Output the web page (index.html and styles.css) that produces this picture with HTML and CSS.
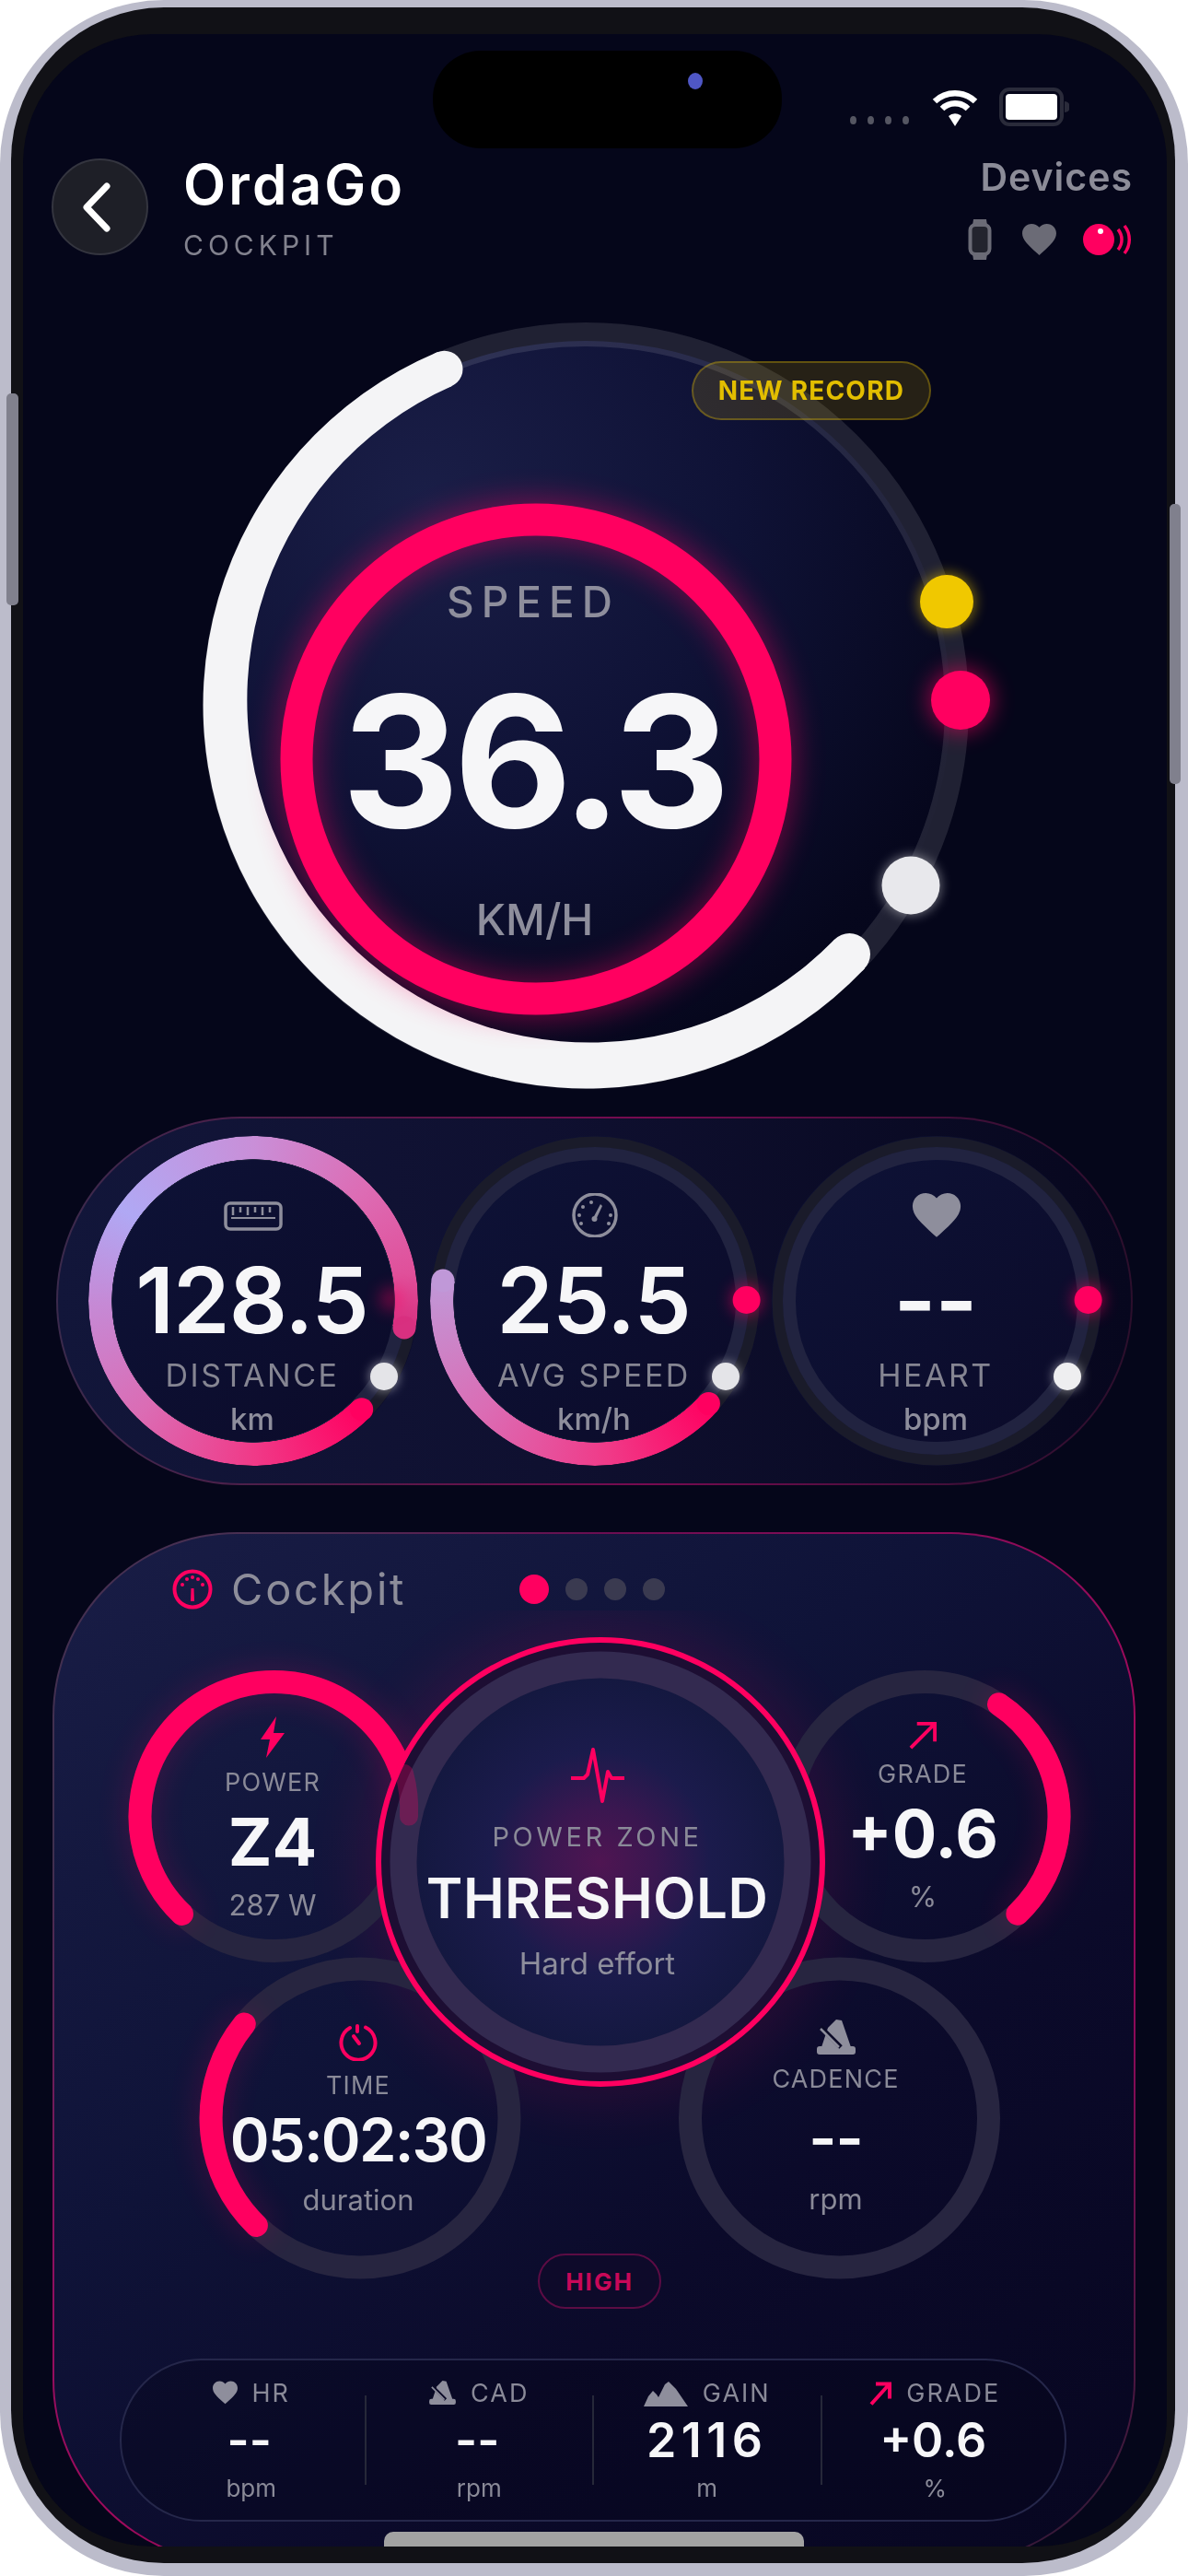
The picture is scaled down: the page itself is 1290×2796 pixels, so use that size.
FILE: index.html
```html
<!DOCTYPE html>
<html lang="en">
<head>
<meta charset="utf-8">
<title>OrdaGo Cockpit</title>
<link rel="stylesheet" href="styles.css">
</head>
<body>
<div class="phone">
  <span class="btn btn-left"></span>
  <span class="btn btn-right"></span>
  <div class="bezel">
    <div class="screen">

      <div class="status">
        <div class="island"><span class="camera"></span></div>
        <div class="signal"><i></i><i></i><i></i><i></i></div>
        <svg class="wifi" viewBox="0 0 52 40"><path d="M4 13A32 32 0 0 1 48 13" fill="none" stroke="#fff" stroke-width="6.500"/><path d="M12 21A20 20 0 0 1 40 21" fill="none" stroke="#fff" stroke-width="6.500"/><path d="M19 29A10 10 0 0 1 33 29L26 40Z" fill="#fff"/></svg>
        <svg class="battery" viewBox="0 0 76 42"><rect x="2" y="2" width="66" height="38" rx="9" fill="none" stroke="#2a2b3a" stroke-width="4"/><rect x="7" y="7" width="56" height="28" rx="4" fill="#fff"/><path d="M71 15a6 6 0 0 1 0 12z" fill="#2a2b3a"/></svg>
      </div>

      <header class="topbar">
        <div class="brand">
          <div class="back"><svg viewBox="0 0 32 54"><path d="M27 4L5 27l22 23" fill="none" stroke="#fff" stroke-width="7" stroke-linecap="round" stroke-linejoin="round"/></svg></div>
          <div class="brand-text">
            <div class="brand-name">OrdaGo</div>
            <div class="brand-sub">COCKPIT</div>
          </div>
        </div>
        <div class="devices">
          <div class="devices-title">Devices</div>
          <div class="devices-icons">
            <svg class="dev-watch" viewBox="0 0 26 44"><path d="M6 0h14l1 7H5zM6 44h14l1-7H5z" fill="#6b6b76"/><rect x="2.500" y="6" width="21" height="32" rx="6" fill="#23242e" stroke="#6b6b76" stroke-width="4"/></svg>
            <svg class="dev-heart" viewBox="2 3 20 18.400"><path d="M12 21.350l-1.450-1.320C5.400 15.360 2 12.280 2 8.500 2 5.420 4.420 3 7.500 3c1.740 0 3.410.81 4.500 2.090C13.090 3.810 14.760 3 16.500 3 19.580 3 22 5.420 22 8.500c0 3.780-3.400 6.860-8.550 11.540L12 21.350z" fill="#6b6b76"/></svg>
            <svg class="dev-sensor" viewBox="0 0 54 34"><circle cx="17" cy="17" r="17" fill="#ff0060"/><circle cx="19" cy="8" r="3" fill="#fff"/><path d="M38 6a17 17 0 0 1 0 22M45 2a24 24 0 0 1 0 30" fill="none" stroke="#ff0060" stroke-width="3.500"/></svg>
          </div>
        </div>
      </header>

      <section class="gauge">
        <svg class="gauge-art" viewBox="24 282 1242 930">
          <defs>
            <radialGradient id="discFill" cx="0.28" cy="0.22" r="0.95">
              <stop offset="0" stop-color="#1a1e47"/>
              <stop offset="0.45" stop-color="#0f1236"/>
              <stop offset="0.85" stop-color="#06071d"/>
              <stop offset="1" stop-color="#05061a"/>
            </radialGradient>
          </defs>
          <circle cx="635" cy="766" r="396" fill="url(#discFill)"/>
          <circle cx="635" cy="766" r="403" fill="none" stroke="#fff" stroke-opacity=".11" stroke-width="26"/>
          <path d="M473.800 382.200A416 416 0 1 0 937.900 1051.200L904.900 1020.100A372 372 0 1 1 489.300 419.200Z" fill="#f4f4f6"/>
          <circle cx="481.500" cy="400.700" r="20" fill="#f4f4f6"/>
          <circle cx="921.400" cy="1035.600" r="22.600" fill="#f4f4f6"/>
          <circle class="glow-lg" cx="581" cy="824" r="260" fill="none" stroke="#ff0060" stroke-width="44"/>
          <circle cx="581" cy="824" r="260" fill="none" stroke="#ff0060" stroke-width="35"/>
          <circle class="glow-yellow" cx="1027" cy="653" r="31" fill="#f0c800"/>
          <circle cx="1027" cy="653" r="29" fill="#f0c800"/>
          <circle class="glow-pink" cx="1042" cy="760" r="34" fill="#ff0060"/>
          <circle cx="1042" cy="760" r="32" fill="#ff0060"/>
          <circle class="glow-white" cx="988" cy="961" r="33" fill="#fff"/>
          <circle cx="988" cy="961" r="31.500" fill="#e8e8ec"/>
        </svg>
        <div class="badge">NEW RECORD</div>
        <div class="speed">
          <div class="speed-label">SPEED</div>
          <div class="speed-value">36.3</div>
          <div class="speed-unit">KM/H</div>
        </div>
      </section>

      <section class="metrics">
        <div class="dial">
          <svg class="dial-track" viewBox="-179 -179 358 358"><circle r="172.500" fill="none" stroke="#1a1b2a" stroke-width="12"/><circle r="160" fill="none" stroke="#212340" stroke-width="14"/></svg>
          <div class="dial-arc arc-distance"></div>
          <svg class="dial-track" viewBox="-179 -179 358 358">
            <circle cx="164" cy="28.900" r="12.500" fill="#d83080"/><circle cx="117.700" cy="117.700" r="12.500" fill="#ff0060"/>
            <circle class="glow-pink-sm glow-faint" cx="150" cy="-2" r="12" fill="#ff0060"/>
            <circle class="glow-white-sm" cx="142" cy="82" r="15" fill="#fff"/><circle cx="142" cy="82" r="15" fill="#e4e4e8"/>
          </svg>
          <div class="dial-body">
            <svg class="dial-icon" viewBox="0 0 64 48"><rect x="2" y="11" width="60" height="28" rx="5" fill="none" stroke="#8e8e9c" stroke-width="3.500"/><path d="M10 15v9M18 15v6M26 15v9M34 15v6M42 15v9M50 15v6" stroke="#8e8e9c" stroke-width="2.500"/><path d="M8 27h48" stroke="#8e8e9c" stroke-width="2"/></svg>
            <div class="dial-value">128.5</div>
            <div class="dial-label">DISTANCE</div>
            <div class="dial-unit">km</div>
          </div>
        </div>
        <div class="dial">
          <svg class="dial-track" viewBox="-179 -179 358 358"><circle r="172.500" fill="none" stroke="#1a1b2a" stroke-width="12"/><circle r="160" fill="none" stroke="#212340" stroke-width="14"/></svg>
          <div class="dial-arc arc-avg"></div>
          <svg class="dial-track" viewBox="-179 -179 358 358">
            <circle cx="-165" cy="-22" r="12.500" fill="#c098d8"/><circle cx="123.400" cy="111.400" r="12.500" fill="#ff0060"/>
            <circle class="glow-pink-sm" cx="164.600" cy="-1" r="15" fill="#ff0060"/><circle cx="164.600" cy="-1" r="15" fill="#ff0060"/>
            <circle class="glow-white-sm" cx="142" cy="82" r="15" fill="#fff"/><circle cx="142" cy="82" r="15" fill="#e4e4e8"/>
          </svg>
          <div class="dial-body">
            <svg class="dial-icon" viewBox="0 0 54 48"><circle cx="27" cy="24" r="23" fill="none" stroke="#8e8e9c" stroke-width="3.500"/><path d="M25 27l8-15 2 2-7 15z" fill="#8e8e9c"/><circle cx="26.500" cy="28" r="3" fill="#8e8e9c"/><g fill="#8e8e9c"><circle cx="12" cy="33" r="2"/><circle cx="10" cy="24" r="2"/><circle cx="14" cy="15" r="2"/><circle cx="23" cy="10" r="2"/><circle cx="42" cy="33" r="2"/><circle cx="44" cy="24" r="2"/></g></svg>
            <div class="dial-value">25.5</div>
            <div class="dial-label">AVG SPEED</div>
            <div class="dial-unit">km/h</div>
          </div>
        </div>
        <div class="dial">
          <svg class="dial-track" viewBox="-179 -179 358 358"><circle r="172.500" fill="none" stroke="#1a1b2a" stroke-width="12"/><circle r="160" fill="none" stroke="#212340" stroke-width="14"/>
            <circle class="glow-pink-sm" cx="164.600" cy="-1" r="15" fill="#ff0060"/><circle cx="164.600" cy="-1" r="15" fill="#ff0060"/>
            <circle class="glow-white-sm" cx="142" cy="82" r="15" fill="#fff"/><circle cx="142" cy="82" r="15" fill="#eeeef0"/>
          </svg>
          <div class="dial-body">
            <svg class="dial-icon" viewBox="2 3 20 18.400"><path d="M12 21.350l-1.450-1.320C5.400 15.360 2 12.280 2 8.500 2 5.420 4.420 3 7.500 3c1.740 0 3.410.81 4.500 2.090C13.090 3.810 14.760 3 16.500 3 19.580 3 22 5.420 22 8.500c0 3.780-3.400 6.860-8.550 11.540L12 21.350z" fill="#8e8e9c"/></svg>
            <div class="dial-value">--</div>
            <div class="dial-label">HEART</div>
            <div class="dial-unit">bpm</div>
          </div>
        </div>
      </section>

      <section class="card">
        <div class="card-head">
          <svg class="card-icon" viewBox="0 0 44 46"><circle cx="22" cy="23" r="19.500" fill="none" stroke="#ff0060" stroke-width="4"/><path d="M20.500 22h3l.5 14h-4z" fill="#ff0060"/><g fill="#ff0060"><circle cx="11" cy="18" r="2"/><circle cx="16" cy="12" r="2"/><circle cx="22" cy="10" r="2"/><circle cx="28" cy="12" r="2"/><circle cx="33" cy="18" r="2"/></g></svg>
          <div class="card-title">Cockpit</div>
          <div class="pager"><i class="on"></i><i></i><i></i><i></i></div>
        </div>

        <div class="cluster">
          <svg class="cluster-art" viewBox="58 1748 1172 812">
            <defs>
              <radialGradient id="coreFill">
                <stop offset="0" stop-color="#4f1552"/>
                <stop offset="0.3" stop-color="#3a1750"/>
                <stop offset="0.6" stop-color="#1b1b4c"/>
                <stop offset="1" stop-color="#141840"/>
              </radialGradient>
            </defs>
            <circle class="glow-core" cx="651" cy="2021" r="262" fill="#ff0060"/>
            <g fill="none" stroke="#272540" stroke-width="25">
              <circle cx="297" cy="1971.500" r="146"/>
              <circle cx="1003" cy="1971.500" r="146"/>
              <circle cx="390" cy="2299" r="162"/>
              <circle cx="910.500" cy="2299" r="162"/>
            </g>
            <g fill="none" stroke="#ff0060" stroke-width="30" stroke-linecap="round" class="glow-arcs">
              <path d="M196.500 2077.400A146 146 0 1 1 443 1971.500"/>
              <path d="M1083.500 1849.800A146 146 0 0 1 1103.900 2077.200"/>
              <path d="M277.400 2415.400A162 162 0 0 1 264.300 2196.900"/>
            </g>
            <g fill="none" stroke="#ff0060" stroke-width="25" stroke-linecap="round">
              <path d="M196.500 2077.400A146 146 0 1 1 443 1971.500"/>
              <path d="M1083.500 1849.800A146 146 0 0 1 1103.900 2077.200"/>
              <path d="M277.400 2415.400A162 162 0 0 1 264.300 2196.900"/>
            </g>
            <circle cx="651" cy="2021" r="241" fill="#1d0e33"/>
            <circle cx="651" cy="2021" r="241" fill="none" stroke="#ff0060" stroke-width="6"/>
            <circle cx="651" cy="2021" r="200" fill="url(#coreFill)"/>
            <circle cx="651" cy="2021" r="214" fill="none" stroke="#332a50" stroke-width="29"/>
            <path d="M438 1925A146 146 0 0 1 443 1971.500" fill="none" stroke="#ff0060" stroke-opacity=".28" stroke-width="20" stroke-linecap="round"/>
          </svg>

          <div class="tile tile-core">
            <svg class="ic-pulse" viewBox="0 0 58 60"><path d="M0 33h14l4 -4L24 2l10 56 6-32 4 7h14" fill="none" stroke="#ff0060" stroke-width="4" stroke-linejoin="round"/></svg>
            <div class="core-label">POWER ZONE</div>
            <div class="core-value">THRESHOLD</div>
            <div class="core-note">Hard effort</div>
          </div>

          <div class="tile tile-power">
            <svg class="ic-bolt" viewBox="0 0 28 45"><path d="M18 0L1 25h10L7 45 27 18H15z" fill="#ff0060"/></svg>
            <div class="tile-label">POWER</div>
            <div class="tile-big">Z4</div>
            <div class="tile-unit">287 W</div>
          </div>

          <div class="tile tile-grade">
            <svg class="ic-arrow" viewBox="0 0 32 32"><path d="M2 30L29 3M9 3h20v20" fill="none" stroke="#ff0060" stroke-width="4"/></svg>
            <div class="tile-label">GRADE</div>
            <div class="tile-big">+0.6</div>
            <div class="tile-unit">%</div>
          </div>

          <div class="tile tile-time">
            <svg class="ic-timer" viewBox="0 0 42 40"><path d="M12 4A18.500 18.500 0 1 0 29 3.500" fill="none" stroke="#ff0060" stroke-width="4" stroke-linecap="round"/><path d="M20 2v6M16 13l6 8" fill="none" stroke="#ff0060" stroke-width="4" stroke-linecap="round"/></svg>
            <div class="tile-label">TIME</div>
            <div class="tile-mid">05:02:30</div>
            <div class="tile-unit">duration</div>
          </div>

          <div class="tile tile-cadence">
            <svg class="ic-metro" viewBox="0 0 42 38"><path d="M21 0l6 1 10 29H5L12 9z" fill="#8e8e9c"/><path d="M3 29h36a3 3 0 0 1 3 3v3a3 3 0 0 1-3 3H3a3 3 0 0 1-3-3v-3a3 3 0 0 1 3-3z" fill="#8e8e9c"/><path d="M4 8l22 22" stroke="#0b0a26" stroke-width="5"/><path d="M4 10l20 20" stroke="#8e8e9c" stroke-width="2.500"/></svg>
            <div class="tile-label">CADENCE</div>
            <div class="tile-mid">--</div>
            <div class="tile-unit">rpm</div>
          </div>

          <div class="high">HIGH</div>
        </div>

        <div class="stats">
          <div class="stat">
            <div class="stat-head"><svg class="st-heart" viewBox="2 3 20 18.400"><path d="M12 21.350l-1.450-1.320C5.400 15.360 2 12.280 2 8.500 2 5.420 4.420 3 7.500 3c1.740 0 3.410.81 4.500 2.090C13.090 3.810 14.760 3 16.500 3 19.580 3 22 5.420 22 8.500c0 3.780-3.400 6.860-8.550 11.540L12 21.350z" fill="#8e8e9c"/></svg><span>HR</span></div>
            <div class="stat-value">--</div>
            <div class="stat-unit">bpm</div>
          </div>
          <div class="divider"></div>
          <div class="stat">
            <div class="stat-head"><svg class="st-metro" viewBox="0 0 42 38"><path d="M21 0l6 1 10 29H5L12 9z" fill="#8e8e9c"/><path d="M3 29h36a3 3 0 0 1 3 3v3a3 3 0 0 1-3 3H3a3 3 0 0 1-3-3v-3a3 3 0 0 1 3-3z" fill="#8e8e9c"/><path d="M4 8l22 22" stroke="#0b0a26" stroke-width="5"/><path d="M4 10l20 20" stroke="#8e8e9c" stroke-width="2.500"/></svg><span>CAD</span></div>
            <div class="stat-value">--</div>
            <div class="stat-unit">rpm</div>
          </div>
          <div class="divider"></div>
          <div class="stat">
            <div class="stat-head"><svg class="st-peak" viewBox="0 0 48 30"><path d="M0 30l5-11 5-6 4 4 2 3 7-14 4-3 4 4 4 4 13 19z" fill="#8e8e9c"/></svg><span>GAIN</span></div>
            <div class="stat-value stat-wide">2116</div>
            <div class="stat-unit">m</div>
          </div>
          <div class="divider"></div>
          <div class="stat">
            <div class="stat-head"><svg class="st-arrow" viewBox="0 0 24 26"><path d="M2 25L21 4M7 3h15v16" fill="none" stroke="#ff0060" stroke-width="4"/></svg><span>GRADE</span></div>
            <div class="stat-value">+0.6</div>
            <div class="stat-unit">%</div>
          </div>
        </div>
      </section>

      <div class="home"></div>
    </div>
  </div>
</div>
</body>
</html>
```
FILE: styles.css
```css
* { box-sizing: border-box; }
html, body { margin: 0; padding: 0; background: #fff; }
body { width: 1290px; height: 2796px; overflow: hidden; font-family: "Inter", "Liberation Sans", sans-serif; color: #8e8e9c; }

.phone { position: relative; width: 1290px; height: 2796px; padding: 8px 14px 14px 12px; background: #bcbccb; border-radius: 178px; }
.btn { position: absolute; z-index: 2; background: #80808d; border-radius: 5px; }
.btn-left { left: 7px; top: 427px; width: 13px; height: 230px; }
.btn-right { right: 8px; top: 547px; width: 12px; height: 304px; }
.bezel { height: 100%; padding: 29px 9px 18px 13px; background: #111116; border-radius: 166px; }
.screen { position: relative; height: 100%; background: #05061a; border-radius: 140px; overflow: hidden; filter: blur(.6px); }

/* status bar */
.status { display: flex; align-items: flex-start; height: 135px; padding: 18px 0 0 445px; }
.island { position: relative; width: 379px; height: 106px; background: #000; border-radius: 52px; }
.camera { position: absolute; left: 277px; top: 24px; width: 16px; height: 18px; border-radius: 50%; background: #4f57c5; }
.signal { display: flex; gap: 12px; margin: 71px 0 0 74px; }
.signal i { width: 7px; height: 9px; border-radius: 50%; background: #555662; }
.wifi { width: 52px; height: 40px; margin: 42px 0 0 24px; }
.battery { width: 76px; height: 42px; margin: 40px 0 0 22px; }

/* header */
.topbar { display: flex; justify-content: space-between; align-items: flex-start; height: 110px; padding: 0 37px 0 31px; }
.brand { display: flex; align-items: flex-start; gap: 38px; }
.back { display: flex; align-items: center; justify-content: center; width: 105px; height: 105px; border-radius: 50%; background: #1e1f27; border: 2px solid #34353f; }
.back svg { width: 32px; height: 54px; margin-left: -8px; }
.brand-text { margin-top: -2px; }
.brand-name { font-size: 60px; line-height: 60px; font-weight: 600; letter-spacing: 3.200px; color: #fff; }
.brand-sub { margin-top: 21px; font-size: 30px; line-height: 30px; letter-spacing: 5px; color: #82828e; }
.devices { display: flex; flex-direction: column; align-items: flex-end; }
.devices-title { font-size: 41px; line-height: 41px; font-weight: 600; letter-spacing: 1px; color: #8c8c98; }
.devices-icons { display: flex; align-items: center; gap: 29px; margin-top: 25px; height: 44px; }
.dev-watch { width: 26px; height: 44px; margin-right: 4px; }
.dev-heart { width: 37px; height: 34px; }
.dev-sensor { width: 54px; height: 34px; }

/* main gauge */
.gauge { position: relative; height: 930px; }
.gauge-art { display: block; width: 1242px; height: 930px; overflow: visible; }
.glow-lg { filter: blur(16px); opacity: .4; }
.glow-yellow { filter: blur(7px); opacity: .5; }
.glow-pink { filter: blur(12px); opacity: .6; }
.glow-white { filter: blur(6px); opacity: .4; }
.badge { position: absolute; left: 726px; top: 110px; width: 260px; height: 64px; display: flex; align-items: center; justify-content: center; border-radius: 32px; border: 2px solid rgba(240, 200, 0, .3); background: rgba(240, 200, 0, .14); color: #e2be00; font-size: 28px; font-weight: 700; letter-spacing: 1.200px; }
.speed { position: absolute; left: 315px; top: 300px; width: 484px; height: 484px; padding-top: 48px; display: flex; flex-direction: column; align-items: center; }
.speed-label { font-size: 46px; line-height: 46px; font-weight: 500; letter-spacing: 8px; color: #8e8e9c; margin-left: -6px; }
.speed-value { margin-top: 51px; font-size: 198px; line-height: 198px; font-weight: 700; letter-spacing: -6px; color: #f6f6f8; margin-left: -6px; }
.speed-unit { margin-top: 49px; font-size: 47px; line-height: 47px; font-weight: 500; color: #8e8e9c; margin-left: -3px; }

/* metrics pill */
.metrics { display: flex; gap: 13px; width: 1169px; height: 400px; margin-left: 36px; padding: 19px 0 0 33px; border: 2px solid transparent; border-radius: 200px; background: linear-gradient(90deg, #12163a 0%, #0f1030 45%, #07071e 100%) padding-box, linear-gradient(90deg, #3b2a4c 0%, #5a1748 30%, #780a50 55%, #400f38 85%, #2c0f2c 100%) border-box; }
.dial { position: relative; width: 358px; height: 358px; flex: none; border-radius: 50%; background: linear-gradient(130deg, #0e1338, #0b0a28); }
.dial-track { position: absolute; inset: 0; width: 358px; height: 358px; overflow: visible; }
.dial-arc { position: absolute; inset: 0; border-radius: 50%; -webkit-mask: radial-gradient(closest-side, transparent calc(100% - 25.500px), #000 calc(100% - 25px)); mask: radial-gradient(closest-side, transparent calc(100% - 25.500px), #000 calc(100% - 25px)); }
.arc-distance { background: conic-gradient(#c98fd8 0deg, #dd6cb4 45deg, #e0509a 80deg, #d83080 100deg, transparent 100deg, transparent 135deg, #ff0060 135deg, #f03a88 180deg, #db6cb4 225deg, #c58ad6 270deg, #b0a8f4 305deg, #c98fd8 360deg); }
.arc-avg { background: conic-gradient(transparent 0deg, transparent 132deg, #ff0060 132deg, #f03a88 175deg, #db6cb4 225deg, #c098d8 278deg, transparent 278deg); }
.glow-pink-sm { filter: blur(9px); opacity: .7; }
.glow-faint { opacity: .45; }
.glow-white-sm { filter: blur(6px); opacity: .55; }
.dial-body { position: absolute; inset: 0; padding-top: 62px; display: flex; flex-direction: column; align-items: center; }
.dial-icon { height: 48px; width: 64px; margin-bottom: 18.500px; }
.dial-value { font-size: 99px; line-height: 99px; font-weight: 600; letter-spacing: -1px; color: #f6f6f8; margin-left: -3px; }
.dial-label { margin-top: 15px; font-size: 34px; line-height: 34px; letter-spacing: 2.500px; color: #858592; margin-left: -2px; }
.dial-unit { margin-top: 14px; font-size: 33px; line-height: 33px; font-weight: 500; color: #8e8e9c; margin-left: -2px; }

/* cockpit card */
.card { width: 1176px; height: 1120px; margin: 51px 0 0 32px; border: 2px solid transparent; border-radius: 200px; background: linear-gradient(140deg, #191d46 0%, #0f1338 38%, #0b0a2a 65%, #070620 100%) padding-box, conic-gradient(from 0deg, #6a0e52 0deg, #a00a5c 60deg, #8a0a58 90deg, #3a1a3a 130deg, #2c1030 180deg, #a00a5c 225deg, #8c1060 250deg, #3f304f 290deg, #4a2f52 330deg, #6a0e52 360deg) border-box; }
.card-head { display: flex; align-items: center; height: 83px; padding: 37px 0 0 128px; }
.card-icon { width: 44px; height: 46px; }
.card-title { margin-left: 20px; font-size: 47px; line-height: 46px; letter-spacing: 2.800px; color: #8d8d9a; }
.pager { display: flex; align-items: center; gap: 18px; margin-left: 123px; }
.pager i { width: 24px; height: 24px; border-radius: 50%; background: #3a3a50; }
.pager i.on { width: 32px; height: 32px; background: #ff0060; }

.cluster { position: relative; width: 1172px; height: 812px; }
.cluster-art { position: absolute; inset: 0; width: 1172px; height: 812px; overflow: hidden; }
.glow-core { filter: blur(30px); opacity: .11; }
.glow-arcs { filter: blur(16px); opacity: .17; }
.tile { position: absolute; display: flex; flex-direction: column; align-items: center; width: 300px; }
.tile-core { left: 389.500px; top: 73px; width: 400px; padding-top: 76px; }
.tile-power { left: 87px; top: 115px; }
.tile-grade { left: 793px; top: 120px; }
.tile-time { left: 180px; top: 449px; }
.tile-cadence { left: 698.500px; top: 444px; }
.tile-time .tile-mid { margin-top: 13px; letter-spacing: -1.800px; }
.tile-cadence .tile-mid { margin-top: 18px; }
.tile-cadence .tile-unit { margin-top: 18px; }
.ic-pulse { width: 58px; height: 60px; }
.core-label { margin-top: 22px; font-size: 29px; line-height: 29px; letter-spacing: 3.600px; color: #8a8a98; }
.core-value { margin-top: 22px; font-size: 60px; line-height: 60px; font-weight: 600; letter-spacing: .5px; color: #f6f6f8; }
.core-note { margin-top: 24.500px; font-size: 33px; line-height: 33px; color: #8e8e9c; }
.ic-bolt { width: 28px; height: 45px; }
.ic-arrow { width: 31px; height: 31px; }
.ic-timer { width: 42px; height: 40px; }
.ic-metro { width: 42px; height: 38px; }
.tile-label { margin-top: 13px; font-size: 27px; line-height: 27px; letter-spacing: 1.200px; color: #8a8a98; }
.tile-big { margin-top: 15px; font-size: 72px; line-height: 72px; font-weight: 700; color: #f6f6f8; }
.tile-mid { margin-top: 15px; font-size: 65px; line-height: 65px; font-weight: 600; letter-spacing: -1px; color: #f6f6f8; }
.tile-unit { margin-top: 17px; font-size: 31px; line-height: 31px; color: #8a8a98; }
.high { position: absolute; left: 525px; top: 698px; width: 134px; height: 60px; display: flex; align-items: center; justify-content: center; border-radius: 30px; border: 2px solid #5c0c44; background: #0e0a2a; color: #c80858; font-size: 26px; font-weight: 700; letter-spacing: 2px; }

/* stats */
.stats { display: flex; align-items: flex-start; width: 1028px; height: 177px; margin-left: 71px; padding: 0 18px; border: 2px solid #25274a; border-radius: 88px; background: rgba(5, 5, 25, .35); }
.stat { flex: 1; display: flex; flex-direction: column; align-items: center; padding-top: 21.700px; }
.divider { flex: none; width: 2px; height: 97px; margin-top: 38px; background: #262839; }
.stat-head { display: flex; align-items: center; gap: 16px; height: 27px; font-size: 27px; line-height: 27px; letter-spacing: 2px; color: #8a8a98; }
.st-heart { width: 27px; height: 26px; }
.st-metro { width: 29px; height: 26px; }
.st-peak { width: 48px; height: 30px; }
.st-arrow { width: 24px; height: 27px; }
.stat-value { margin-top: 12.300px; font-size: 52px; line-height: 52px; font-weight: 600; color: #f6f6f8; margin-left: -4px; }
.stat-wide { letter-spacing: 5.500px; margin-left: 0; }
.stat-unit { margin-top: 11.700px; font-size: 26px; line-height: 27px; color: #8a8a98; }

.home { position: absolute; left: 392px; bottom: 0; width: 456px; height: 16px; border-radius: 10px 10px 0 0; background: #a2a2a2; }
```
